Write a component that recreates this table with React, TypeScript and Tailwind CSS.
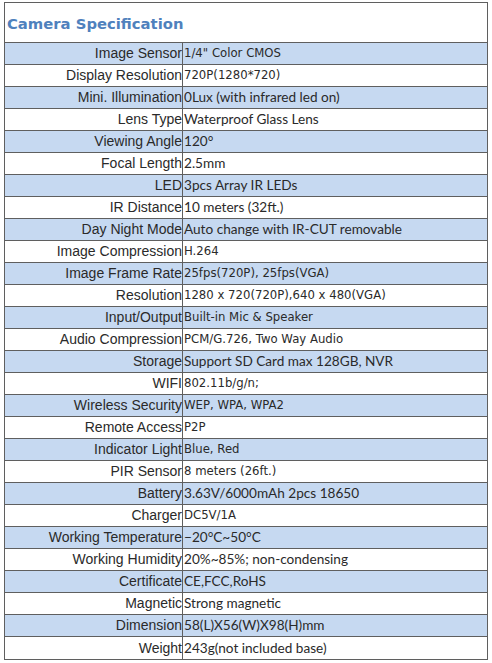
import React from "react";

type Row = { k: string; v: string; f: "v" | "c" };

const rows: Row[] = [
  { k: "Image Sensor", v: '1/4" Color CMOS', f: "v" },
  { k: "Display Resolution", v: "720P(1280*720)", f: "v" },
  { k: "Mini. Illumination", v: "0Lux (with infrared led on)", f: "c" },
  { k: "Lens Type", v: "Waterproof Glass Lens", f: "c" },
  { k: "Viewing Angle", v: "120°", f: "c" },
  { k: "Focal Length", v: "2.5mm", f: "c" },
  { k: "LED", v: "3pcs Array IR LEDs", f: "c" },
  { k: "IR Distance", v: "10 meters (32ft.)", f: "c" },
  { k: "Day Night Mode", v: "Auto change with IR-CUT removable", f: "c" },
  { k: "Image Compression", v: "H.264", f: "v" },
  { k: "Image Frame Rate", v: "25fps(720P), 25fps(VGA)", f: "v" },
  { k: "Resolution", v: "1280 x 720(720P),640 x 480(VGA)", f: "v" },
  { k: "Input/Output", v: "Built-in Mic & Speaker", f: "v" },
  { k: "Audio Compression", v: "PCM/G.726, Two Way Audio", f: "v" },
  { k: "Storage", v: "Support SD Card max 128GB, NVR", f: "c" },
  { k: "WIFI", v: "802.11b/g/n;", f: "v" },
  { k: "Wireless Security", v: "WEP, WPA, WPA2", f: "v" },
  { k: "Remote Access", v: "P2P", f: "v" },
  { k: "Indicator Light", v: "Blue, Red", f: "v" },
  { k: "PIR Sensor", v: "8 meters (26ft.)", f: "v" },
  { k: "Battery", v: "3.63V/6000mAh 2pcs 18650", f: "c" },
  { k: "Charger", v: "DC5V/1A", f: "v" },
  { k: "Working Temperature", v: "−20°C~50°C", f: "c" },
  { k: "Working Humidity", v: "20%~85%; non-condensing", f: "c" },
  { k: "Certificate", v: "CE,FCC,RoHS", f: "c" },
  { k: "Magnetic", v: "Strong magnetic", f: "c" },
  { k: "Dimension", v: "58(L)X56(W)X98(H)mm", f: "c" },
  { k: "Weight", v: "243g(not included base)", f: "c" },
];

export default function App() {
  return (
    <div className="w-[492px] h-[663px] bg-white pt-[2px] pl-[4px]">
      <div className="w-[484px] border border-[#5f5f5f]">
        <div className="h-[40px] border-b border-[#5f5f5f] flex items-center pl-[2px] pt-[4px]">
          <span
            className="text-[#4f81bd] font-bold text-[14.8px]"
            style={{ fontFamily: '"DejaVu Sans", Verdana, sans-serif' }}
          >
            Camera Specification
          </span>
        </div>
        {rows.map((r, i) => (
          <div
            key={r.k}
            className={`grid grid-cols-[178px_1fr] h-[22px] ${
              i < rows.length - 1 ? "border-b border-[#5f5f5f]" : ""
            } ${i % 2 === 0 ? "bg-[#c6d9f1]" : "bg-white"}`}
          >
            <div
              className="border-r border-[#5f5f5f] flex items-center justify-end text-[14px] text-[#2a2a2a] whitespace-nowrap"
              style={{ fontFamily: '"Liberation Sans", Arial, sans-serif' }}
            >
              {r.k}
            </div>
            <div
              className={`flex items-center pl-[1px] text-[#2a2a2a] whitespace-nowrap ${
                r.f === "v" ? "text-[11.7px]" : "text-[13.6px]"
              }`}
              style={{
                fontFamily:
                  r.f === "v"
                    ? '"DejaVu Sans", Verdana, sans-serif'
                    : 'Lato, "Open Sans", sans-serif',
              }}
            >
              {r.v}
            </div>
          </div>
        ))}
      </div>
    </div>
  );
}
